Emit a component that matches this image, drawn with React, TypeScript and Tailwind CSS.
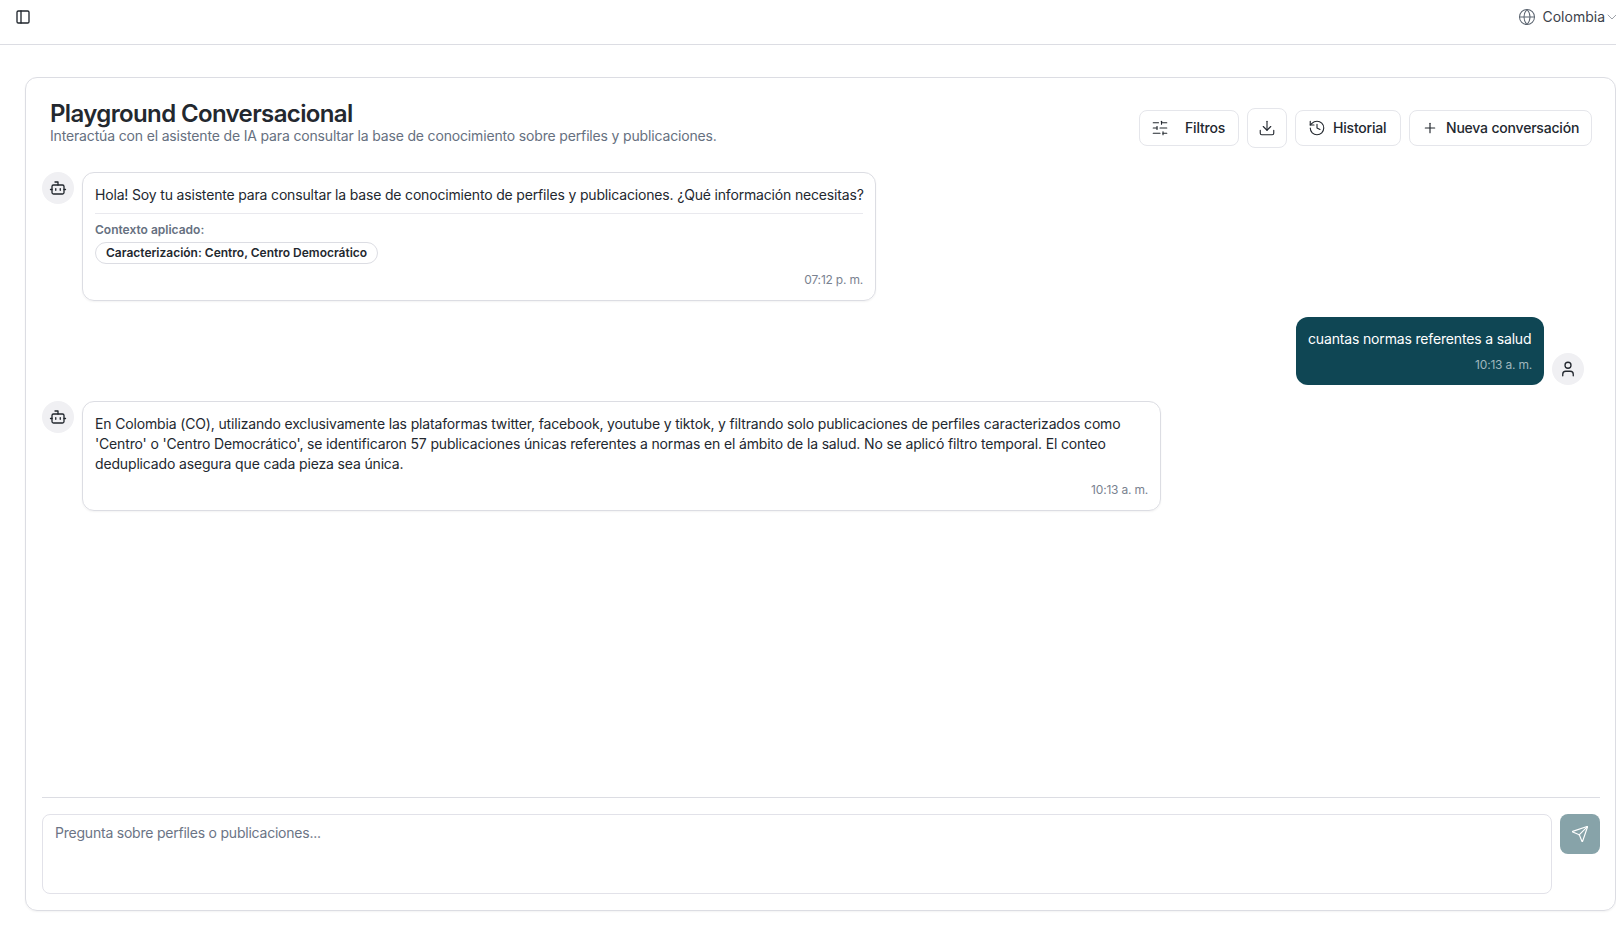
import { PanelLeft, Globe, ChevronDown, SlidersHorizontal, Download, History, Plus, Bot, User, Send } from "lucide-react";

const font = { fontFamily: "Inter, 'Liberation Sans', sans-serif" };

function BotAvatar() {
  return (
    <div className="w-8 h-8 shrink-0 rounded-full bg-[#f0f0f3] flex items-center justify-center text-[#20262d]">
      <Bot size={18} strokeWidth={1.75} />
    </div>
  );
}

export default function App() {
  return (
    <div className="h-[941px] w-[1616px] overflow-hidden bg-white flex flex-col text-[#23282f]" style={font}>
      <header className="h-[45px] shrink-0 border-b border-[#dcdde3] flex items-center justify-between pl-[15px] pb-[11px]">
        <PanelLeft size={16} strokeWidth={2} className="text-[#20262d]" />
        <div className="flex items-center text-[14px] text-[#3c424b] -mr-[4px]">
          <Globe size={18} strokeWidth={1.35} className="text-[#5b6470] mr-[7px]" />
          <span>Colombia</span>
          <ChevronDown size={16} strokeWidth={1.25} className="text-[#8a8f98] -ml-[1px] shrink-0" />
        </div>
      </header>
      <main className="flex-1 pl-[25px] pt-[32px] pb-[30px]">
        <div className="h-full border border-[#dcdde3] rounded-xl shadow-[0_1px_2px_rgba(0,0,0,0.05)] flex flex-col pl-4 pr-[15px] pb-4">
          <div className="flex items-start justify-between pt-[21px] pl-2 pr-2 h-[94px] shrink-0">
            <div>
              <h1 className="text-[24px] leading-[28px] font-semibold tracking-[-0.63px] mt-[1px]">Playground Conversacional</h1>
              <p className="text-[14px] leading-[16px] tracking-[-0.16px] text-[#667080]">Interactúa con el asistente de IA para consultar la base de conocimiento sobre perfiles y publicaciones.</p>
            </div>
            <div className="flex items-center gap-2 mt-[9px] text-[14px] font-medium tracking-[-0.2px]">
              <button className="h-9 w-[100px] border border-[#e5e6eb] rounded-lg flex items-center pl-[11px] gap-[16px]">
                <SlidersHorizontal size={18} strokeWidth={1.5} />
                <span className="pb-[2px]">Filtros</span>
              </button>
              <button className="h-10 w-10 border border-[#e5e6eb] rounded-lg flex items-center justify-center">
                <Download size={18} strokeWidth={1.5} />
              </button>
              <button className="h-9 w-[106px] border border-[#e5e6eb] rounded-lg flex items-center pl-[12px] gap-[7px]">
                <History size={18} strokeWidth={1.5} />
                <span className="pb-[2px]">Historial</span>
              </button>
              <button className="h-9 w-[183px] border border-[#e5e6eb] rounded-lg flex items-center pl-[12px] gap-[8px]">
                <Plus size={16} strokeWidth={1.75} />
                <span className="pb-[2px]">Nueva conversación</span>
              </button>
            </div>
          </div>

          <div className="flex-1 flex flex-col gap-4">
            <div className="flex items-start gap-2">
              <BotAvatar />
              <div className="w-[794px] h-[129px] border border-[#dcdde3] rounded-xl shadow-[0_1px_2px_rgba(0,0,0,0.05)] px-3 pt-3 text-[14px] tracking-[-0.17px]">
                <p className="leading-[20px] whitespace-nowrap">Hola! Soy tu asistente para consultar la base de conocimiento de perfiles y publicaciones. ¿Qué información necesitas?</p>
                <div className="border-t border-[#e9e9ee] mt-[8px] pt-[8px]">
                  <p className="text-[12px] leading-4 font-semibold tracking-normal text-[#667080]">Contexto aplicado:</p>
                  <span className="inline-flex items-center h-[22px] mt-[4px] px-[10px] border border-[#dcdde3] rounded-full text-[12px] tracking-normal font-semibold">Caracterización: Centro, Centro Democrático</span>
                </div>
                <p className="text-right text-[12px] leading-4 tracking-[-0.2px] text-[#7a8290] mt-[8px]">07:12 p. m.</p>
              </div>
            </div>

            <div className="flex items-end justify-end gap-2 pr-4">
              <div className="w-[248px] h-[68px] rounded-xl bg-[#0f4654] text-white px-3 pt-3 text-[14px] tracking-[-0.16px]">
                <p className="leading-[20px] whitespace-nowrap">cuantas normas referentes a salud</p>
                <p className="text-right text-[12px] leading-4 tracking-[-0.2px] text-[#9fb7bd] mt-[8px]">10:13 a. m.</p>
              </div>
              <div className="w-8 h-8 shrink-0 rounded-full bg-[#f0f0f3] flex items-center justify-center">
                <User size={18} strokeWidth={1.75} />
              </div>
            </div>

            <div className="flex items-start gap-2">
              <BotAvatar />
              <div className="w-[1079px] h-[110px] border border-[#dcdde3] rounded-xl shadow-[0_1px_2px_rgba(0,0,0,0.05)] px-3 pt-3 text-[14px] tracking-[-0.155px]">
                <p className="leading-[20px]">En Colombia (CO), utilizando exclusivamente las plataformas twitter, facebook, youtube y tiktok, y filtrando solo publicaciones de perfiles caracterizados como 'Centro' o 'Centro Democrático', se identificaron 57 publicaciones únicas referentes a normas en el ámbito de la salud. No se aplicó filtro temporal. El conteo deduplicado asegura que cada pieza sea única.</p>
                <p className="text-right text-[12px] leading-4 tracking-[-0.2px] text-[#7a8290] mt-[8px]">10:13 a. m.</p>
              </div>
            </div>
          </div>

          <div className="border-t border-[#dcdde3] pt-4 flex items-start gap-2 shrink-0">
            <div className="flex-1 h-[80px] border border-[#e2e2e9] rounded-lg px-3 py-2 text-[14px] tracking-[-0.22px] leading-5 text-[#6b7485]">Pregunta sobre perfiles o publicaciones...</div>
            <button className="w-10 h-10 rounded-lg bg-[#87a3a9] flex items-center justify-center text-white">
              <Send size={18} strokeWidth={1.5} />
            </button>
          </div>
        </div>
      </main>
    </div>
  );
}
